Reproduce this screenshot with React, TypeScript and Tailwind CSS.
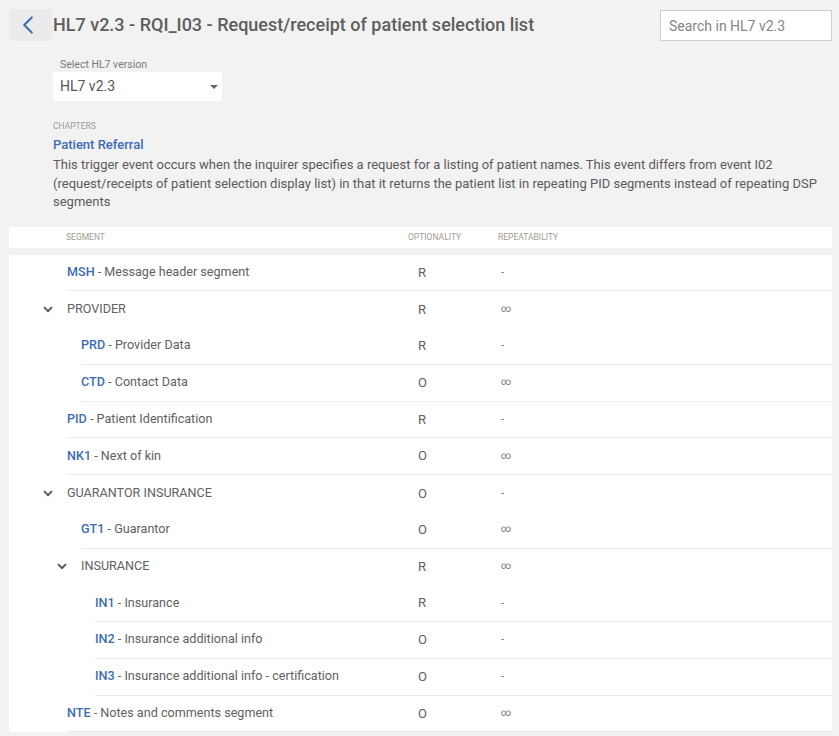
import { ChevronLeft } from 'lucide-react';

type Row = {
  code?: string;
  name: string;
  opt: string;
  rep: string;
  level: 0 | 1 | 2;
  group?: boolean;
};

const rows: Row[] = [
  { code: 'MSH', name: 'Message header segment', opt: 'R', rep: '-', level: 0 },
  { name: 'PROVIDER', opt: 'R', rep: '∞', level: 0, group: true },
  { code: 'PRD', name: 'Provider Data', opt: 'R', rep: '-', level: 1 },
  { code: 'CTD', name: 'Contact Data', opt: 'O', rep: '∞', level: 1 },
  { code: 'PID', name: 'Patient Identification', opt: 'R', rep: '-', level: 0 },
  { code: 'NK1', name: 'Next of kin', opt: 'O', rep: '∞', level: 0 },
  { name: 'GUARANTOR INSURANCE', opt: 'O', rep: '-', level: 0, group: true },
  { code: 'GT1', name: 'Guarantor', opt: 'O', rep: '∞', level: 1 },
  { name: 'INSURANCE', opt: 'R', rep: '∞', level: 1, group: true },
  { code: 'IN1', name: 'Insurance', opt: 'R', rep: '-', level: 2 },
  { code: 'IN2', name: 'Insurance additional info', opt: 'O', rep: '-', level: 2 },
  { code: 'IN3', name: 'Insurance additional info - certification', opt: 'O', rep: '-', level: 2 },
  { code: 'NTE', name: 'Notes and comments segment', opt: 'O', rep: '∞', level: 0 },
];

const leafIndent = { 0: 'pl-[58px]', 1: 'pl-[72px]', 2: 'pl-[86px]' };
const groupIndent = { 0: 'pl-[34px]', 1: 'pl-[48px]', 2: 'pl-[62px]' };

function Cells({ row }: { row: Row }) {
  return (
    <>
      <div className="w-[90px] pl-[10px] text-[13px] text-[#616161]">{row.opt}</div>
      <div className="flex w-[334px] items-center pl-[3px] text-[#757575]">
        {row.rep === '∞' ? (
          <span className="-mt-[1px] text-[10px] leading-none">∞</span>
        ) : (
          <span className="text-[11px] leading-none">-</span>
        )}
      </div>
    </>
  );
}

function SegmentRow({ row }: { row: Row }) {
  if (row.group) {
    return (
      <div className={`flex h-[36.75px] items-center ${groupIndent[row.level]}`}>
        <svg width="10" height="7" viewBox="0 0 10 7" className="mr-[14px]">
          <path d="M1 1.2l4 4 4-4" fill="none" stroke="#555" strokeWidth="1.9" />
        </svg>
        <div className="flex-1 text-[12.6px] text-[#616161]">{row.name}</div>
        <Cells row={row} />
      </div>
    );
  }
  return (
    <div className={`h-[36.75px] ${leafIndent[row.level]}`}>
      <div className="flex h-full items-center border-b border-[#ededed]">
        <div className="flex-1 text-[12.6px] text-[#616161]">
          <span className="font-medium text-[#3c6db3]">{row.code}</span> - {row.name}
        </div>
        <Cells row={row} />
      </div>
    </div>
  );
}

export default function App() {
  return (
    <div className="min-h-screen bg-[#f2f2f2] pl-[9px] pr-[7px] font-['Roboto',sans-serif]">
      <header className="flex items-start pt-[9px]">
        <button className="flex h-[32px] w-[43px] items-center justify-center rounded-[4px] bg-[#ebebeb] text-[#3d6fb6]">
          <ChevronLeft size={30} strokeWidth={1.7} className="-ml-[6px]" />
        </button>
        <h1 className="ml-[1px] flex-1 pt-[3px] text-[18px] leading-[26px] font-medium text-[#5e5e5e]">
          HL7 v2.3 - RQI_I03 - Request/receipt of patient selection list
        </h1>
        <input
          placeholder="Search in HL7 v2.3"
          className="mt-[1px] h-[31px] w-[172px] border border-[#cfcfcf] bg-white px-[8px] text-[14px] text-[#555] placeholder:text-[#858585] outline-none"
        />
      </header>

      <div className="ml-[44px] mt-[18px]">
        <div className="pl-[7px] text-[10.5px] leading-[12px] text-[#7a7a7a]">Select HL7 version</div>
        <div className="mt-[1px] flex h-[29px] w-[169px] items-center justify-between bg-white pl-[7px] pr-[4px]">
          <span className="text-[14px] text-[#555]">HL7 v2.3</span>
          <svg width="8" height="4" viewBox="0 0 8 4">
            <path d="M0 0h8L4 4z" fill="#666" />
          </svg>
        </div>

        <div className="mt-[20px] text-[8.5px] leading-[10px] text-[#9a9a9a] uppercase">Chapters</div>
        <div className="mt-[6px] text-[13px] leading-[16px] font-medium text-[#3c6db3]">Patient Referral</div>
        <p className="mt-[3px] pr-[6px] text-[13px] leading-[18.5px] text-[#5b5b5b]">
          This trigger event occurs when the inquirer specifies a request for a listing of patient names. This event
          differs from event I02 (request/receipts of patient selection display list) in that it returns the patient
          list in repeating PID segments instead of repeating DSP segments
        </p>
      </div>

      <div className="mt-[15px] flex h-[21px] items-center bg-white pl-[57px] text-[8.5px] text-[#a39a92] uppercase">
        <div className="flex-1">Segment</div>
        <div className="w-[90px]">Optionality</div>
        <div className="w-[334px]">Repeatability</div>
      </div>

      <div className="mt-[7px] bg-white">
        {rows.map((row) => (
          <SegmentRow key={row.name} row={row} />
        ))}
      </div>
    </div>
  );
}
